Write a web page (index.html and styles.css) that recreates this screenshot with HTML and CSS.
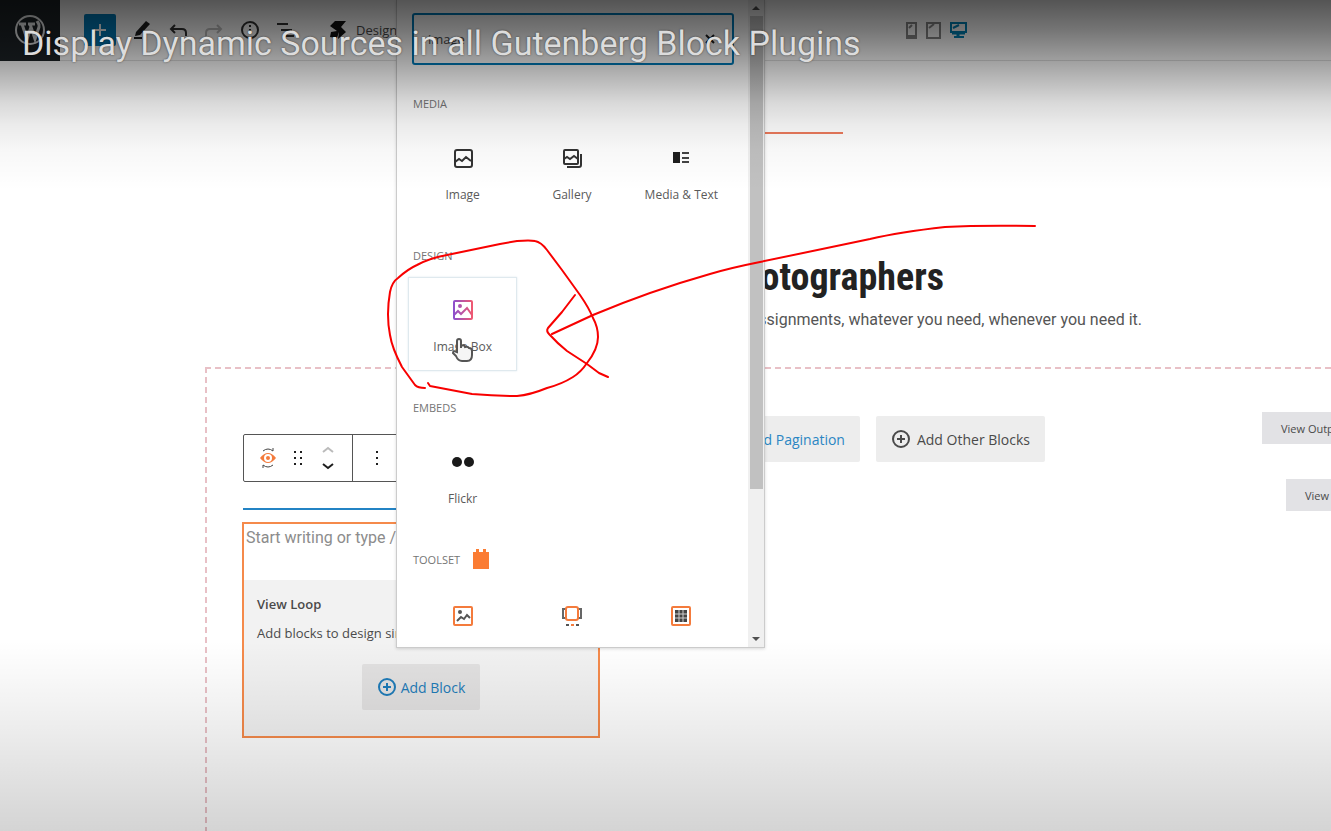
FILE: index.html
```html
<!DOCTYPE html>
<html lang="en">
<head>
    <meta charset="UTF-8">
    <meta name="viewport" content="width=device-width, initial-scale=1.0">
    <title>Display Dynamic Sources in all Gutenberg Block Plugins</title>
    <link rel="stylesheet" href="styles.css">
</head>
<body>
    <header class="topbar">
        <a class="wp-logo" href="#" aria-label="WordPress">
            <svg width="32" height="32" viewBox="0 0 32 32" fill="none" stroke="#e8eaeb">
                <circle cx="16" cy="16" r="14" stroke-width="2"/>
                <path d="M5 10h7M14 10h7M8 10l5 15 4-12M16 10l5 15 4-12c1-3-1-4-2-6" stroke-width="3"/>
            </svg>
        </a>
        <button class="add-button" aria-label="Add block">
            <svg width="24" height="24" viewBox="0 0 24 24" stroke="#fff" stroke-width="2"><path d="M12 6v12M6 12h12"/></svg>
        </button>
        <button class="tool" aria-label="Edit">
            <svg width="24" height="24" viewBox="0 0 24 24"><path d="M5 18l1-4L16 3l4 3L10 17z" fill="#1e1e1e"/><path d="M4 20h8" stroke="#1e1e1e" stroke-width="2"/></svg>
        </button>
        <button class="tool" aria-label="Undo">
            <svg width="24" height="24" viewBox="0 0 24 24" fill="none" stroke="#333" stroke-width="2"><path d="M9 7l-4 4 4 4M5 11h11q4 0 4 4v3"/></svg>
        </button>
        <button class="tool tool-off" aria-label="Redo">
            <svg width="24" height="24" viewBox="0 0 24 24" fill="none" stroke="#333" stroke-width="2"><path d="M15 7l4 4-4 4M19 11H8q-4 0-4 4v3"/></svg>
        </button>
        <button class="tool" aria-label="Details">
            <svg width="24" height="24" viewBox="0 0 24 24" fill="none" stroke="#333" stroke-width="2"><circle cx="12" cy="12" r="8"/><path d="M12 11v5M12 7v2"/></svg>
        </button>
        <button class="tool" aria-label="List view">
            <svg width="24" height="24" viewBox="0 0 24 24" stroke="#333" stroke-width="2"><path d="M3 6h11M7 12h11M11 18h9"/></svg>
        </button>
        <button class="design-button">
            <svg width="20" height="20" viewBox="0 0 20 20" fill="#111"><path d="M7 1h11l-5 6 5 5-8 7 1-7H3l6-1-7-5z"/><path d="M3 12h8l-2 6-7-1z"/></svg>
            Design
        </button>
        <div class="devices">
            <button aria-label="Mobile">
                <svg width="11" height="17" viewBox="0 0 11 17" fill="none" stroke="#888"><path d="M1 1h9v15H1z" stroke-width="2"/><path d="M1 14h9M3 6l3-3" stroke-width="2"/></svg>
            </button>
            <button aria-label="Tablet">
                <svg width="15" height="17" viewBox="0 0 15 17" fill="none" stroke="#888"><path d="M1 1h13v15H1z" stroke-width="2"/><path d="M3 6l5-4" stroke-width="2"/></svg>
            </button>
            <button aria-label="Desktop">
                <svg width="17" height="17" viewBox="0 0 17 17" fill="none" stroke="#0085ba"><path d="M1 1h15v9H1z" stroke-width="2"/><path d="M2 11h13M8 11v4" stroke-width="3"/><path d="M3 6l6-3M4 15h10" stroke-width="2"/></svg>
            </button>
        </div>
    </header>

    <main class="canvas">
        <section class="hero">
            <div class="hero-line"></div>
            <h1>Photographers</h1>
            <p>assignments, whatever you need, whenever you need it.</p>
        </section>

        <section class="view">
            <div class="view-column">
                <div class="block-toolbar">
                    <div class="toolbar-group">
                        <button aria-label="View">
                            <svg width="18" height="22" viewBox="0 0 18 22" fill="none"><path d="M1 11q8-10 16 0-8 10-16 0z" fill="#f47b3c"/><circle cx="9" cy="11" r="3" stroke="#fff" stroke-width="2"/><path d="M4 4q5-4 10 0V1M14 18q-5 4-10 0v3" stroke="#444" stroke-width="1"/></svg>
                        </button>
                        <button aria-label="Drag">
                            <svg width="12" height="18" viewBox="0 0 12 18" fill="#1e1e1e"><path d="M2 2h2v2H2zM8 2h2v2H8zM2 8h2v2H2zM8 8h2v2H8zM2 14h2v2H2zM8 14h2v2H8z"/></svg>
                        </button>
                        <button aria-label="Move">
                            <svg width="14" height="26" viewBox="0 0 14 26" fill="none" stroke-width="2"><path d="M2 7l5-4 5 4" stroke="#bbb"/><path d="M2 19l5 4 5-4" stroke="#1e1e1e"/></svg>
                        </button>
                    </div>
                    <button class="toolbar-more" aria-label="More">
                        <svg width="4" height="18" viewBox="0 0 4 18" fill="#1e1e1e"><path d="M1 2h2v2H1zM1 8h2v2H1zM1 14h2v2H1z"/></svg>
                    </button>
                </div>
                <div class="insert-line"></div>
                <div class="loop">
                    <input class="loop-input" type="text" aria-label="Block content" placeholder="Start writing or type / to choose">
                    <div class="loop-body">
                        <h2>View Loop</h2>
                        <p>Add blocks to design single</p>
                        <button class="gray-button loop-add">
                            <svg width="20" height="20" viewBox="0 0 20 20" fill="none" stroke="currentColor" stroke-width="2"><circle cx="10" cy="10" r="8"/><path d="M10 6v8M6 10h8"/></svg>
                            Add Block
                        </button>
                    </div>
                </div>
            </div>
            <div class="view-actions">
                <button class="gray-button link">Add Pagination</button>
                <button class="gray-button">
                    <svg width="20" height="20" viewBox="0 0 20 20" fill="none" stroke="currentColor" stroke-width="2"><circle cx="10" cy="10" r="8"/><path d="M10 6v8M6 10h8"/></svg>
                    Add Other Blocks
                </button>
            </div>
            <div class="view-tags">
                <button>View Output</button>
                <button class="indent">View</button>
            </div>
        </section>
    </main>

    <!-- block inserter -->
    <aside class="inserter">
        <div class="inserter-content">
            <div class="search">
                <input type="text" aria-label="Search for a block" value="image">
                <button aria-label="Clear">
                    <svg width="12" height="12" viewBox="0 0 12 12" stroke="#1e1e1e" stroke-width="2"><path d="M2 2l8 8M10 2l-8 8"/></svg>
                </button>
            </div>

            <section class="category">
                <h3>Media</h3>
                <div class="blocks">
                    <button class="block">
                        <svg width="24" height="24" viewBox="0 0 24 24" fill="none" stroke="#333" stroke-width="2"><rect x="4" y="4" width="17" height="17" rx="2"/><path d="M4 16l4-3 3 2 4-4 5 4"/></svg>
                        Image
                    </button>
                    <button class="block">
                        <svg width="24" height="24" viewBox="0 0 24 24" fill="none" stroke="#333" stroke-width="2"><rect x="4" y="4" width="14" height="14" rx="1"/><path d="M4 13l3-2 3 2 4-3 4 3M21 8v11q0 2-2 2H7"/></svg>
                        Gallery
                    </button>
                    <button class="block">
                        <svg width="24" height="24" viewBox="0 0 24 24"><path d="M4 6h7v11H4z" fill="#1e1e1e"/><path d="M13 7h7M13 12h7M13 16h7" stroke="#444" stroke-width="2"/></svg>
                        Media &amp; Text
                    </button>
                </div>
            </section>

            <section class="category">
                <h3>Design</h3>
                <div class="blocks">
                    <button class="block block-hover">
                        <svg width="24" height="24" viewBox="0 0 24 24" fill="none" stroke="url(#boxGradient)" stroke-width="2">
                            <defs><linearGradient id="boxGradient" gradientUnits="userSpaceOnUse" x1="2" y1="12" x2="22" y2="12"><stop offset="0" stop-color="#8a4fd0"/><stop offset="1" stop-color="#f2596e"/></linearGradient></defs>
                            <rect x="3" y="3" width="18" height="18" rx="1"/><circle cx="9" cy="8" r="1"/><path d="M3 17l4-4 3 3 6-6 5 7"/>
                        </svg>
                        Image Box
                    </button>
                </div>
            </section>

            <section class="category">
                <h3>Embeds</h3>
                <div class="blocks">
                    <button class="block">
                        <svg width="24" height="24" viewBox="0 0 24 24" fill="#1a1a1a"><circle cx="6" cy="12" r="5"/><circle cx="18" cy="12" r="5"/></svg>
                        Flickr
                    </button>
                </div>
            </section>

            <section class="category category-toolset">
                <h3>Toolset
                    <svg width="18" height="22" viewBox="0 0 18 22" fill="#fb7c33"><path d="M1 4h3V1h3v3h4V1h3v3h3v17H1z"/></svg>
                </h3>
                <div class="blocks">
                    <button class="block" aria-label="Toolset image">
                        <svg width="24" height="24" viewBox="0 0 24 24" fill="none" stroke-width="2"><rect x="3" y="3" width="18" height="18" rx="1" stroke="#f47b3c"/><circle cx="9" cy="8" r="2" fill="#555"/><path d="M6 17l4-4 3 2 3-4 3 3" stroke="#555"/></svg>
                    </button>
                    <button class="block" aria-label="Toolset slider">
                        <svg width="24" height="24" viewBox="0 0 24 24" fill="none" stroke-width="2"><path d="M6 5H3v9h3M18 5h3v9h-3" stroke="#666"/><rect x="6" y="3" width="12" height="13" rx="2" stroke="#f47b3c"/><path d="M6 21h3M16 21h3" stroke="#555"/><path d="M11 21h3" stroke="#f47b3c"/></svg>
                    </button>
                    <button class="block" aria-label="Toolset gallery">
                        <svg width="24" height="24" viewBox="0 0 24 24" fill="none" stroke-width="2"><rect x="3" y="3" width="18" height="18" rx="1" stroke="#f47b3c"/><path d="M6 6h12v12H6z" fill="#444"/><path d="M10 6v12M14 6v12M6 10h12M6 14h12" stroke="#ccc" stroke-width="1"/></svg>
                    </button>
                </div>
            </section>
        </div>
        <div class="scrollbar">
            <span class="arrow arrow-up"></span>
            <div class="thumb"></div>
            <span class="arrow arrow-down"></span>
        </div>
    </aside>

    <!-- player shading and title -->
    <div class="shade shade-top"></div>
    <div class="shade shade-bottom"></div>
    <div class="video-title">Display Dynamic Sources in all Gutenberg Block Plugins</div>

    <!-- cursor and red pen -->
    <svg class="marks" width="1100" height="420" viewBox="0 0 1100 420" fill="none">
        <path d="M457 352v-11q0-2 2-2t2 2v7-2q3-2 4 1 3-1 4 1 3 0 3 3v4q0 6-5 6h-5q-4 0-6-5l-3-3q0-3 4-1z" fill="#f5f5f5" stroke="#555" stroke-width="2"/>
        <g stroke="#f80000" stroke-width="2" stroke-linecap="round" stroke-linejoin="round">
            <path d="M425 388Q418 388 415 385L402 367Q392 348 390 335 386 315 390 292 392 282 398 278 408 269 417 265 430 258 447 255L500 244 517 241Q530 240 535 241 541 242 547 250L562 270 580 295Q589 308 593 318 598 327 598 337 598 349 587 363 581 372 573 377 562 384 547 388 530 395 517 396 495 396 472 394L430 386 428 383"/>
            <path d="M575 295L562 312 548 328Q546 331 549 334 558 344 567 351L587 364 599 373 608 377"/>
            <path d="M552 334L593 315Q650 291 710 274 730 268 760 262L870 239Q900 232 945 227 980 225 1035 226"/>
        </g>
    </svg>
</body>
</html>
```
FILE: styles.css
```css
* {
    box-sizing: border-box;
}

body {
    margin: 0;
    min-height: 100vh;
    display: flex;
    flex-direction: column;
    position: relative;
    overflow: hidden;
    background: #fff;
    color: #4a4a4a;
    font-family: "Open Sans", "Noto Sans", sans-serif;
    font-size: 13px;
}

h1, h2, h3, p {
    margin: 0;
}

button, input {
    font: inherit;
    color: inherit;
    border: none;
    padding: 0;
    background: none;
}

svg {
    display: block;
    flex: none;
}

/* top bar */
.topbar {
    display: flex;
    align-items: center;
    height: 61px;
    border-bottom: 1px solid #e0e0e0;
}

.wp-logo {
    width: 60px;
    height: 61px;
    margin-right: 24px;
    display: flex;
    align-items: center;
    justify-content: center;
    background: #1d2327;
}

.add-button {
    width: 32px;
    height: 32px;
    margin-right: 8px;
    padding: 4px;
    border-radius: 2px;
    background: #007cba;
}

.tool {
    width: 36px;
    height: 36px;
    padding: 6px;
}

.tool-off {
    opacity: 0.3;
}

.design-button {
    display: flex;
    align-items: center;
    gap: 8px;
    margin-left: 24px;
}

.devices {
    display: flex;
    gap: 9px;
    margin-left: auto;
    margin-right: 364px;
}

/* page under edit */
.canvas {
    flex: 1;
    display: flex;
    flex-direction: column;
    margin-left: 205px;
}

.hero {
    display: flex;
    flex-direction: column;
    align-items: center;
    padding-top: 71px;
    font-family: Roboto, sans-serif;
    text-align: right;
}

.hero-line {
    width: 150px;
    height: 2px;
    background: #ec7a5c;
}

.hero h1 {
    width: 352px;
    margin-top: 119px;
    font-family: "Roboto Condensed", Roboto, sans-serif;
    font-size: 38px;
    line-height: 48px;
    color: #222;
}

.hero p {
    width: 748px;
    margin-top: 7px;
    font-size: 16px;
    line-height: 24px;
    color: #555;
}

.view {
    flex: 1;
    display: flex;
    align-items: flex-start;
    margin-top: 35px;
    padding-left: 37px;
    background:
        repeating-linear-gradient(90deg, #e8c0c6 0 6px, transparent 6px 10px) top / 100% 2px no-repeat,
        repeating-linear-gradient(180deg, #e8c0c6 0 6px, transparent 6px 10px) left / 2px 100% no-repeat;
}

.view-column {
    width: 358px;
    padding-top: 67px;
}

.block-toolbar {
    display: flex;
    height: 48px;
    margin-left: 1px;
    border: 1px solid #555;
    border-radius: 2px;
}

.toolbar-group {
    display: flex;
    padding: 0 9px;
    border-right: 1px solid #555;
}

.block-toolbar button {
    width: 30px;
    display: flex;
    align-items: center;
    justify-content: center;
}

.block-toolbar .toolbar-more {
    width: 48px;
}

.insert-line {
    height: 2px;
    margin: 26px 0 12px 1px;
    background: #2383c4;
}

.loop {
    border: 2px solid #f58a4b;
}

.loop-input {
    display: block;
    width: 100%;
    height: 56px;
    padding: 0 2px 30px;
    font-family: Roboto, sans-serif;
    font-size: 16px;
}

.loop-input::placeholder {
    color: #8c8c8c;
}

.loop-body {
    padding: 15px 13px 26px;
    background: #f2f2f2;
}

.loop-body h2 {
    font-size: 13px;
    line-height: 18px;
    font-weight: 600;
}

.loop-body p {
    margin: 11px 0 22px;
    line-height: 18px;
}

.gray-button {
    display: flex;
    align-items: center;
    gap: 6px;
    height: 46px;
    padding: 0 15px;
    border-radius: 2px;
    background: #ededed;
    font-size: 14px;
    white-space: nowrap;
}

.loop-add {
    gap: 4px;
    margin: 0 auto;
    background: #e2e1e1;
    color: #1e7bb8;
}

.link {
    color: #2b86c3;
}

.view-actions {
    display: flex;
    justify-content: flex-end;
    gap: 16px;
    width: 445px;
    padding-top: 49px;
}

.view-tags {
    width: 69px;
    margin-left: auto;
    padding-top: 45px;
    display: flex;
    flex-direction: column;
    gap: 35px;
    overflow: hidden;
}

.view-tags button {
    height: 32px;
    padding-left: 19px;
    background: #e2e2e5;
    font-size: 11px;
    text-align: left;
    white-space: nowrap;
}

.view-tags .indent {
    margin-left: 24px;
}

/* inserter */
.inserter {
    position: absolute;
    top: 0;
    left: 396px;
    width: 369px;
    display: flex;
    border: 1px solid #ccc;
    border-top: none;
    background: #fff;
    box-shadow: 0 1px 3px rgba(0, 0, 0, 0.15);
}

.inserter-content {
    flex: 1;
    padding: 13px 12px 3px 11px;
}

.search {
    display: flex;
    align-items: center;
    width: 322px;
    height: 52px;
    margin: 0 0 30px 4px;
    padding: 0 16px 0 14px;
    border: 2px solid #007cba;
    border-radius: 3px;
}

.search input {
    flex: 1;
    min-width: 0;
    outline: none;
}

.category {
    margin-bottom: 28px;
}

.category h3 {
    display: flex;
    align-items: center;
    gap: 12px;
    height: 16px;
    margin: 0 5px 14px;
    color: #757575;
    font-size: 11px;
    font-weight: 500;
    text-transform: uppercase;
}

.category-toolset {
    margin-bottom: 0;
}

.category-toolset h3 {
    margin-bottom: 16px;
}

.blocks {
    display: grid;
    grid-template-columns: repeat(3, 1fr);
}

.block {
    display: flex;
    flex-direction: column;
    align-items: center;
    gap: 17px;
    padding: 20px 0 15px;
    border: 1px solid transparent;
    font-size: 12px;
    line-height: 16px;
    color: #5a5a5a;
}

.block-hover {
    border-color: #dfe9ee;
    box-shadow: 0 0 2px #dfe9ee;
}

.scrollbar {
    width: 16px;
    display: flex;
    flex-direction: column;
    align-items: center;
    background: #f0f0f0;
}

.thumb {
    width: 13px;
    height: 473px;
    margin-bottom: auto;
    background: #c1c1c1;
}

.arrow {
    border: 4px solid transparent;
}

.arrow-up {
    margin: 2px 0 6px;
    border-bottom-color: #505050;
}

.arrow-down {
    margin-bottom: 2px;
    border-top-color: #505050;
}

/* overlays */
.shade {
    position: absolute;
    left: 0;
    right: 0;
    pointer-events: none;
}

.shade-top {
    top: 0;
    height: 190px;
    background: linear-gradient(rgba(0, 0, 0, 0.67), rgba(0, 0, 0, 0.54) 30px, rgba(0, 0, 0, 0.38) 60px, rgba(0, 0, 0, 0.27) 80px, rgba(0, 0, 0, 0.15) 103px, rgba(0, 0, 0, 0.08) 125px, rgba(0, 0, 0, 0.03) 150px, transparent);
}

.shade-bottom {
    bottom: 0;
    height: 190px;
    background: linear-gradient(transparent, rgba(0, 0, 0, 0.03) 40px, rgba(0, 0, 0, 0.08) 95px, rgba(0, 0, 0, 0.17));
}

.video-title {
    position: absolute;
    top: 24px;
    left: 22px;
    color: #dcdcdc;
    font-family: Roboto, sans-serif;
    font-size: 34px;
    line-height: 40px;
    white-space: nowrap;
    text-rendering: geometricPrecision;
    text-shadow: 0 0 2px rgba(0, 0, 0, 0.6);
}

.marks {
    position: absolute;
    top: 0;
    left: 0;
    pointer-events: none;
}
```
